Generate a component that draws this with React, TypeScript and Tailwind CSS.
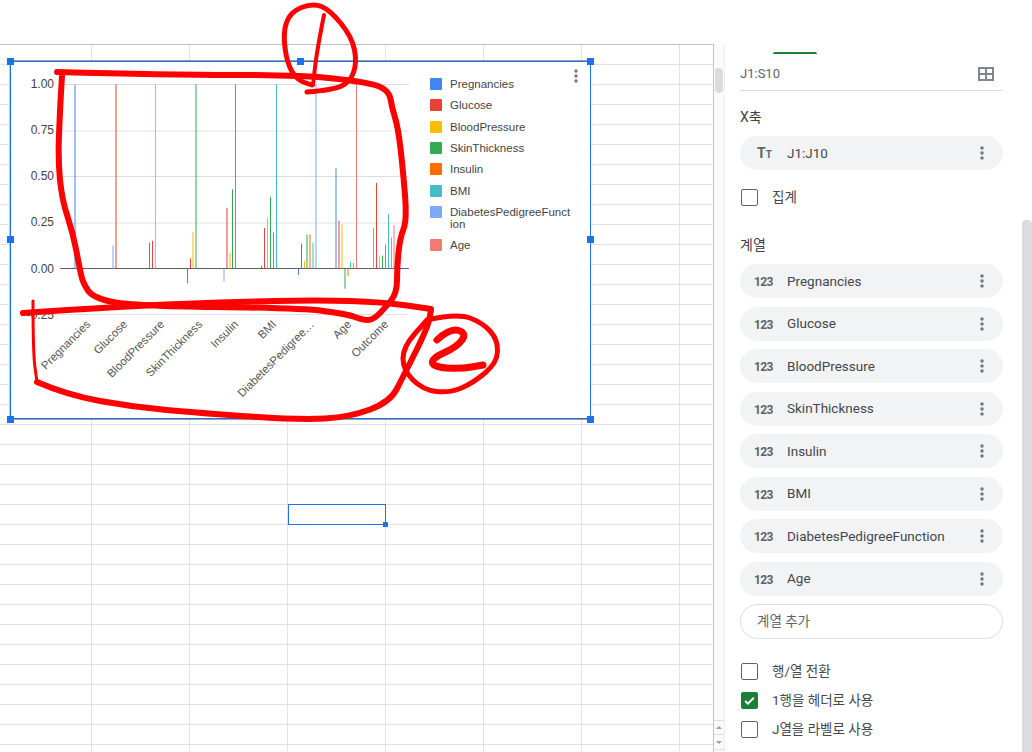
import type { ReactNode } from 'react';

const COLORS = {
    P: '#4285f4', G: '#ea4335', B: '#fbbc04', S: '#34a853',
    I: '#ff6d01', M: '#46bdc6', D: '#7baaf7', A: '#f07b72',
};

const LEGEND = [
    ['Pregnancies', COLORS.P],
    ['Glucose', COLORS.G],
    ['BloodPressure', COLORS.B],
    ['SkinThickness', COLORS.S],
    ['Insulin', COLORS.I],
    ['BMI', COLORS.M],
    ['DiabetesPedigreeFunction', COLORS.D],
    ['Age', COLORS.A],
];

const SERIES = ['Pregnancies', 'Glucose', 'BloodPressure', 'SkinThickness', 'Insulin', 'BMI', 'DiabetesPedigreeFunction', 'Age'];

// 막대: [왼쪽 x, 값, 색]
const BARS: [number, number, string][] = [
    [74.5, 1, COLORS.P],
    [112.5, 0.125, COLORS.D], [115.5, 1, COLORS.G],
    [149, 0.14, COLORS.P], [152, 0.15, COLORS.G], [155, 1, COLORS.B],
    [187, -0.08, COLORS.P], [190, 0.055, COLORS.G], [192.5, 0.2, COLORS.B], [195.5, 1, COLORS.S],
    [223.5, -0.07, COLORS.D], [226.5, 0.33, COLORS.G], [229.5, 0.085, COLORS.B], [232, 0.43, COLORS.S], [235, 1, COLORS.I],
    [261, 0.015, COLORS.P], [264, 0.22, COLORS.G], [267, 0.275, COLORS.B], [270, 0.39, COLORS.S], [273, 0.195, COLORS.I], [276, 1, COLORS.M],
    [298, -0.035, COLORS.P], [301, 0.135, COLORS.G], [304, 0.04, COLORS.B], [306.5, 0.185, COLORS.S], [309.5, 0.185, COLORS.I], [312.5, 0.14, COLORS.M], [315.5, 1, COLORS.D],
    [335.5, 0.545, COLORS.P], [338.5, 0.26, COLORS.G], [341.5, 0.24, COLORS.B], [344.5, -0.11, COLORS.S], [347.5, -0.04, COLORS.I], [350, 0.035, COLORS.M], [353, 0.03, COLORS.D], [356, 1, COLORS.A],
    [373, 0.22, COLORS.D], [376, 0.465, COLORS.G], [379, 0.065, COLORS.B], [382, 0.07, COLORS.S], [385, 0.13, COLORS.I], [388, 0.295, COLORS.M], [391, 0.17, COLORS.D], [393.5, 0.235, COLORS.A],
];

const AXIS = [
    ['Pregnancies', 91], ['Glucose', 128], ['BloodPressure', 165], ['SkinThickness', 203], ['Insulin', 239],
    ['BMI', 277], ['DiabetesPedigree…', 315], ['Age', 352], ['Outcome', 389],
] as [string, number][];

const TICKS: [string, number, number, string][] = [
    ['1.00', 84.5, 87.5, '#dcdcdc'], ['0.75', 131, 134, '#e2e2e2'], ['0.50', 176.5, 179.5, '#dcdcdc'],
    ['0.25', 223, 225.5, '#e2e2e2'], ['0.00', 268.5, 272.5, '#5f5f5f'], ['-0.25', 314.5, 318.5, '#e0e0e0'],
];

// 손글씨 선: [두께, 좌표...]
const STROKES: [number, number[][]][] = [
    [6, [[57, 72], [167, 75], [300, 75], [367, 82], [389, 90], [392, 108], [398, 127], [403, 170], [407, 220], [400, 238], [397, 267], [397, 293], [385, 308], [373, 320], [363, 320], [347, 314], [300, 308], [133, 306], [93, 298], [83, 283], [80, 270], [73, 233], [62, 200], [58, 160], [60, 110], [62, 76]]],
    [6, [[23, 313], [127, 306], [233, 302], [317, 300], [383, 302], [431, 309]]],
    [3, [[33, 301], [33, 353], [37, 382]]],
    [6, [[37, 382], [67, 395], [133, 407], [200, 413], [300, 420], [350, 417], [390, 402], [403, 377], [428, 327], [431, 310]]],
    [5, [[427, 320], [457, 313], [483, 323], [498, 340], [497, 363], [473, 383], [450, 393], [423, 390], [403, 370], [403, 347], [427, 320]]],
    [7, [[437, 340], [450, 328], [467, 333], [457, 347], [432, 358], [433, 367], [460, 369], [483, 365]]],
    [5, [[307, 92], [333, 90], [350, 82], [357, 63], [352, 37], [330, 10], [313, 3], [290, 12], [283, 33], [287, 63], [297, 80], [312, 85]]],
    [4, [[324, 15], [317, 50], [313, 85]]],
];

function smooth(pts: number[][]) {
    let d = `M${pts[0][0]} ${pts[0][1]}`;
    for (let i = 1; i < pts.length - 1; i++) {
        const mx = (pts[i][0] + pts[i + 1][0]) / 2;
        const my = (pts[i][1] + pts[i + 1][1]) / 2;
        d += ` Q${pts[i][0]} ${pts[i][1]} ${mx} ${my}`;
    }
    const last = pts[pts.length - 1];
    return `${d} L${last[0]} ${last[1]}`;
}

function Dots({ className = '' }: { className?: string }) {
    return (
        <svg width="4" height="14" viewBox="0 0 4 14" className={className}>
            <circle cx="2" cy="2" r="1.7" fill="#757575" />
            <circle cx="2" cy="7" r="1.7" fill="#757575" />
            <circle cx="2" cy="12" r="1.7" fill="#757575" />
        </svg>
    );
}

function Plot() {
    return (
        <svg width="410" height="356" viewBox="11 62 410 356" className="shrink-0 overflow-visible">
            {TICKS.map(([label, y, ty, color]) => (
                <g key={label}>
                    <line x1={label === '-0.25' ? 33 : 60} x2="409" y1={y} y2={y} stroke={color} strokeWidth="1" />
                    <text x="54" y={ty} textAnchor="end" fontSize="12" fill="#444444" fontFamily="Liberation Sans, Arial, sans-serif">{label}</text>
                </g>
            ))}
            {BARS.map(([x, v, c]) => (
                <rect key={x} x={x} width="1" y={v > 0 ? 268.5 - v * 184 : 268.5} height={Math.abs(v) * 184} fill={c} />
            ))}
            {AXIS.map(([label, x]) => (
                <text key={label} x={x} y="325" textAnchor="end" fontSize="11.5" fill="#555555" fontFamily="Liberation Sans, Arial, sans-serif" transform={`rotate(-45 ${x} 325)`}>{label}</text>
            ))}
        </svg>
    );
}

function Handle({ className }: { className: string }) {
    return <div className={`absolute w-[7px] h-[7px] bg-[#1a73e8] ${className}`} />;
}

function Chart() {
    return (
        <div className="absolute left-[10px] top-[61px] w-[581px] h-[358px] bg-white border border-[#1a73e8] shadow-[0_-1px_0_#9aa0a6,0_1px_0_#9aa0a6,-1px_0_0_#c4c7cc] [font-family:'Liberation_Sans',Arial,sans-serif]">
            <div className="flex">
                <Plot />
                <div className="ml-[9px] pt-[16px] flex flex-col">
                    {LEGEND.map(([name, color]) => (
                        <div key={name} className="flex items-start gap-[8px] mb-[9.33px]">
                            <span className="w-[12px] h-[12px] shrink-0 rounded-[1px]" style={{ background: color }} />
                            <span className="w-[122px] break-all text-[11.5px] leading-[12px] text-[#444]">{name}</span>
                        </div>
                    ))}
                </div>
            </div>
            <Dots className="absolute left-[563px] top-[7px]" />
            <Handle className="-left-[4px] -top-[4px]" />
            <Handle className="left-[286px] -top-[4px]" />
            <Handle className="-right-[4px] -top-[4px]" />
            <Handle className="-left-[4px] top-[174px]" />
            <Handle className="-right-[4px] top-[174px]" />
            <Handle className="-left-[4px] -bottom-[5px]" />
            <Handle className="-right-[4px] -bottom-[5px]" />
        </div>
    );
}

// 빨간 손글씨 표시
function Annotations() {
    return (
        <svg width="1032" height="752" viewBox="0 0 1032 752" fill="none" stroke="#ff0000" strokeLinejoin="round" strokeLinecap="round" className="absolute left-0 top-0 pointer-events-none">
            {STROKES.map(([w, pts], i) => (
                <path key={i} strokeWidth={w} d={smooth(pts)} />
            ))}
        </svg>
    );
}

function Check({ checked, children }: { checked?: boolean; children: ReactNode }) {
    return (
        <div className="h-[29px] flex items-center pl-[1px]">
            {checked ? (
                <span className="w-[17px] h-[17px] rounded-[2px] bg-[#188038] flex items-center justify-center">
                    <svg width="13" height="13" viewBox="0 0 24 24" fill="none" stroke="#fff" strokeWidth="3.5"><path d="M4 13l5 5L20 7" /></svg>
                </span>
            ) : (
                <span className="w-[17px] h-[17px] rounded-[2px] border border-[#5f6368]" />
            )}
            <span className="ml-[14px] text-[13.5px] text-[#44484c]">{children}</span>
        </div>
    );
}

function Pill({ icon, label }: { icon: ReactNode; label: string }) {
    return (
        <div className="h-[34px] rounded-full bg-[#f1f3f4] flex items-center pl-[14px] pr-[19px]">
            <span className="w-[33px] shrink-0 text-[#5f6368]">{icon}</span>
            <span className="flex-1 text-[13.5px] text-[#44484c]">{label}</span>
            <Dots />
        </div>
    );
}

const NUM_ICON = <span className="text-[12px] font-bold tracking-[-0.6px]">123</span>;
const TEXT_ICON = <span className="pl-[3px] font-bold text-[14px] leading-none">T<span className="text-[10px]">T</span></span>;

function SidePanel() {
    return (
        <div className="relative w-[307px] h-[752px] bg-white pl-[15px] pt-[52px] [font-family:Roboto,'Noto_Sans_CJK_KR',sans-serif]">
            <div className="ml-[33px] w-[44px] h-[2px] bg-[#188038] rounded-t-[2px]" />
            <div className="w-[263px] h-[37px] pt-[3px] flex items-center justify-between border-b border-[#dadce0] pr-[9px]">
                <span className="text-[13px] text-[#5f6368]">J1:S10</span>
                <svg width="16" height="14" viewBox="0 0 16 14" fill="#80868b">
                    <path d="M0 0h16v14H0zM2 2v4h5V2zm7 0v4h5V2zM2 8v4h5V8zm7 0v4h5V8z" fillRule="evenodd" />
                </svg>
            </div>
            <div className="w-[263px]">
                <div className="mt-[16px] h-[20px] flex items-center text-[14px] text-[#3c4043]">X축</div>
                <div className="mt-[9px]"><Pill icon={TEXT_ICON} label="J1:J10" /></div>
                <div className="mt-[13px]"><Check>집계</Check></div>
                <div className="mt-[23px] h-[20px] flex items-center text-[14px] text-[#3c4043]">계열</div>
                <div className="mt-[9px] flex flex-col gap-[8.5px]">
                    {SERIES.map((s) => <Pill key={s} icon={NUM_ICON} label={s} />)}
                </div>
                <div className="mt-[8px] h-[35px] rounded-full border border-[#dadce0] flex items-center pl-[16px] text-[13.5px] text-[#5f6368]">계열 추가</div>
                <div className="mt-[18px]">
                    <Check>행/열 전환</Check>
                    <Check checked>1행을 헤더로 사용</Check>
                    <Check>J열을 라벨로 사용</Check>
                </div>
            </div>
            <div className="absolute right-0 top-[220px] bottom-0 w-[10px] bg-[#dadce0] rounded-t-[4px]" />
        </div>
    );
}

function GridScrollbar() {
    return (
        <div className="w-[11px] shrink-0 mt-[44px] bg-[#fafafa] border-r border-[#eeeeee] flex flex-col">
            <div className="mt-[24px] mx-[1px] h-[25px] rounded-[4px] bg-[#dadce0]" />
            <div className="mt-auto mb-[2px]">
                <div className="h-[15px] border-t border-b border-[#e0e0e0] flex items-center justify-center">
                    <span className="w-0 h-0 border-x-[3px] border-x-transparent border-b-[3px] border-b-[#9aa0a6]" />
                </div>
                <div className="h-[15px] border-b border-[#e0e0e0] flex items-center justify-center">
                    <span className="w-0 h-0 border-x-[3px] border-x-transparent border-t-[3px] border-t-[#9aa0a6]" />
                </div>
            </div>
        </div>
    );
}

export default function App() {
    return (
        <div className="relative w-[1032px] h-[752px] overflow-hidden bg-white flex">
            <div className="w-[714px] shrink-0 mt-[44px] relative border-t border-r border-t-[#c0c0c0] border-r-[#c4c4c4] bg-[linear-gradient(to_right,#e2e2e2_1px,transparent_1px),linear-gradient(to_bottom,#e2e2e2_1px,transparent_1px)] bg-[size:98px_20px] bg-[position:91px_19px]">
                {/* 선택된 셀 */}
                <div className="absolute left-[288px] top-[459px] w-[98px] h-[21px] border border-[#1a73e8]">
                    <div className="absolute -right-[3px] -bottom-[3px] w-[5px] h-[5px] bg-[#1a73e8]" />
                </div>
            </div>
            <GridScrollbar />
            <SidePanel />
            <Chart />
            <Annotations />
        </div>
    );
}
